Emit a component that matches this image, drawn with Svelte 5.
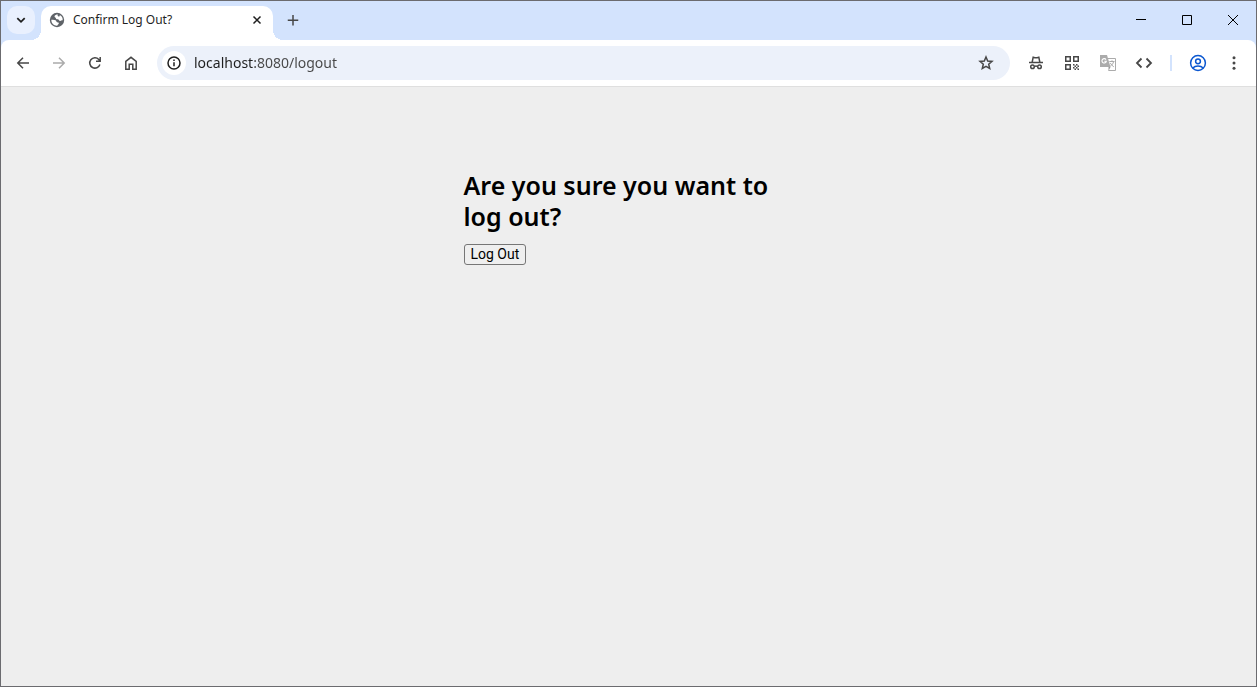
<script lang="ts">
	let address = $state('localhost:8080/logout');
	const title = 'Confirm Log Out?';
</script>

<div class="window">
	<header class="tab-strip">
		<button class="tab-search" type="button" aria-label="Search tabs">
			<svg width="16" height="16" viewBox="0 0 16 16" class="line bold">
				<path d="M4.3 6.2 8 9.8l3.7-3.6" />
			</svg>
		</button>
		<div class="tab">
			<svg width="16" height="16" viewBox="0 0 16 16">
				<circle cx="8" cy="8" r="7.2" fill="#5f6368" />
				<path
					d="M8.600 2.300C7.500 2.800 5.600 3 5.500 4.600c0 1.100 1.400.9 1.500 1.900.1 1 1.300.8 2.300.9 1 .2.600 1.500 1.700 1.600 1 .1 1.400-.7 2.700-.7.200-2.400-1-4.300-2.900-5.300.1 1-.3 1.500-1.100 1.500-.900 0-1.300-1-1.100-2.200z"
					fill="#fff"
				/>
				<path d="M2.300 7.800c1.500-.2 3.200-.2 4.200.5 1 .6.700 1.700 1.700 2 .900.2 1.700.2 1.600 1.200-.1 1-1.300.9-1.500 2.200-3.400.2-6-2.300-6-5.900z" fill="#fff" />
			</svg>
			<span class="title">{title}</span>
			<button class="tab-close" type="button" aria-label="Close tab">
				<svg width="16" height="16" viewBox="0 0 16 16" class="line">
					<path d="m4.500 4.500 7 7m0-7-7 7" />
				</svg>
			</button>
		</div>
		<button class="new-tab" type="button" aria-label="New tab">
			<svg width="16" height="16" viewBox="0 0 16 16" class="line">
				<path d="M8 3v10.500M2.750 8.250h10.500" />
			</svg>
		</button>
		<div class="controls">
			<button type="button" aria-label="Minimize">
				<svg width="12" height="12" viewBox="0 0 12 12" class="thin">
					<path d="M1 5.500h10" />
				</svg>
			</button>
			<button type="button" aria-label="Maximize">
				<svg width="12" height="12" viewBox="0 0 12 12" class="thin">
					<path d="M1.500 1.500h9v9h-9z" />
				</svg>
			</button>
			<button type="button" aria-label="Close">
				<svg width="12" height="12" viewBox="0 0 12 12" class="thin">
					<path d="m1 1 10 10M11 1 1 11" />
				</svg>
			</button>
		</div>
	</header>

	<nav class="toolbar">
		<button type="button" aria-label="Back">
			<svg width="16" height="16" viewBox="0 0 16 16" class="line">
				<path d="M14 8H3M8 2.800 2.800 8 8 13.200" />
			</svg>
		</button>
		<button type="button" aria-label="Forward" class="faded">
			<svg width="16" height="16" viewBox="0 0 16 16" class="line">
				<path d="M2 8h11M8 2.800 13.200 8 8 13.200" />
			</svg>
		</button>
		<button type="button" aria-label="Reload">
			<svg width="16" height="16" viewBox="0 0 16 16" class="line">
				<path d="M12.900 9.500A5.200 5.200 0 1 1 11.800 4.400L13.200 5.900M13.200 2v4.200H9" />
			</svg>
		</button>
		<button type="button" aria-label="Home">
			<svg width="16" height="16" viewBox="0 0 16 16" class="line">
				<path d="M2.800 6.300 8 2.300l5.200 4v7.900H9.800V9.300H6.200v4.900H2.800z" />
			</svg>
		</button>

		<div class="omnibox">
			<button class="site-info" type="button" aria-label="View site information">
				<svg width="16" height="16" viewBox="0 0 16 16" class="line">
					<circle cx="8" cy="8" r="6" />
					<path d="M8 7.200v4M8 4.500v1.500" />
				</svg>
			</button>
			<input type="text" bind:value={address} aria-label="Address" spellcheck="false" />
			<button class="bookmark" type="button" aria-label="Bookmark this tab">
				<svg width="18" height="18" viewBox="0 0 18 18" class="line">
					<path d="m9 3 1.700 4 4.300.4-3.300 2.800 1 4.300L9 12.300l-3.700 2.200 1-4.300L3 7.400 7.300 7z" />
				</svg>
			</button>
		</div>

		<button type="button" aria-label="Incognito extension">
			<svg width="16" height="16" viewBox="0 0 16 16" class="line">
				<path d="M1 7.500h14M4.200 7l1-4.800 1.600.5h2.400l1.600-.5 1 4.800M6.600 11.500c.8-.6 2-.6 2.800 0" />
				<circle cx="4.500" cy="11.700" r="1.800" />
				<circle cx="11.500" cy="11.700" r="1.800" />
			</svg>
		</button>
		<button type="button" aria-label="QR code">
			<svg width="16" height="16" viewBox="0 0 16 16" fill="currentColor">
				<path d="M1 1h6v6H1zm1.500 1.500v3h3v-3zM9 1h6v6H9zm1.500 1.500v3h3v-3zM1 9h6v6H1zm1.500 1.500v3h3v-3z" fill-rule="evenodd" />
				<path d="M9 9h1.500v1.500H9zM12 9h1.500v1.500H12zM10.500 10.500H12V12h-1.500zM13.500 10.500H15V12h-1.500zM9 12h1.500v1.500H9zM12 12h1.500v1.500H12zM10.500 13.500H12V15h-1.500zM13.500 13.500H15V15h-1.500z" />
			</svg>
		</button>
		<button type="button" aria-label="Translate">
			<svg width="18" height="18" viewBox="0 0 18 18" fill="none">
				<path d="M7.500 4.500h9v12H9.500" stroke="#ababab" />
				<path d="M1 1h7l3.500 12H1z" fill="#ababab" />
				<path d="M9.500 17v-4h2z" fill="#999" />
				<path d="M7 5.600a2.200 2.200 0 1 0 .3 1.700H5.300" stroke="#fff" stroke-width="1.100" />
				<path d="M10.300 7.500h5.200M13 6.300v1.200M14.600 7.500c-.4 2.200-1.700 3.700-3.300 4.600M11.300 9c.7 1.500 2 2.800 3.500 3.800" stroke="#ababab" />
			</svg>
		</button>
		<button type="button" aria-label="Developer tools">
			<svg width="18" height="18" viewBox="0 0 18 18" class="line bold">
				<path d="M6.500 4.500 2 9l4.500 4.500M11.500 4.500 16 9l-4.500 4.500" />
			</svg>
		</button>
		<span class="divider"></span>
		<button type="button" aria-label="Profile" class="profile">
			<svg width="18" height="18" viewBox="0 0 18 18" class="line">
				<circle cx="9" cy="9" r="7.400" />
				<circle cx="9" cy="7.300" r="2.400" />
				<path d="M3.800 14c1.300-1.400 3.200-2.100 5.200-2.100s3.900.7 5.200 2.100" />
			</svg>
		</button>
		<button type="button" aria-label="Menu">
			<svg width="16" height="16" viewBox="0 0 16 16" fill="currentColor">
				<circle cx="8" cy="2.700" r="1.500" />
				<circle cx="8" cy="8" r="1.500" />
				<circle cx="8" cy="13.300" r="1.500" />
			</svg>
		</button>
	</nav>

	<main>
		<form class="form-signin" onsubmit={(event) => event.preventDefault()}>
			<h2>Are you sure you want to log out?</h2>
			<button type="submit">Log Out</button>
		</form>
	</main>
</div>

<style>
	:global(body) {
		margin: 0;
	}

	.window {
		display: flex;
		flex-direction: column;
		box-sizing: border-box;
		min-height: 100vh;
		border: 1px solid #6b6b6f;
		background: #d3e3fd;
		font-family: 'Noto Sans', 'Open Sans', sans-serif;
		color: #1f1f1f;
	}

	svg {
		display: block;
		flex: none;
	}

	.line {
		fill: none;
		stroke: currentColor;
		stroke-width: 1.5;
	}

	.bold {
		stroke-width: 1.8;
	}

	.thin {
		fill: none;
		stroke: #000;
		stroke-width: 1;
	}

	.tab-strip button,
	.toolbar button {
		display: flex;
		align-items: center;
		justify-content: center;
		flex: none;
		padding: 0;
		border: none;
		background: transparent;
		color: #474747;
	}

	.tab-strip {
		display: flex;
		height: 39px;
	}

	.tab-strip .tab-search {
		width: 28px;
		height: 28px;
		margin: 5px 6px;
		border-radius: 10px;
		background: #e9f0fe;
		color: #1f1f1f;
	}

	.tab {
		position: relative;
		display: flex;
		align-items: center;
		box-sizing: border-box;
		width: 232px;
		margin-top: 5px;
		padding: 0 8px 6px;
		border-radius: 10px 10px 0 0;
		background: #fff;
	}

	/* flared feet where the tab meets the toolbar */
	.tab::before,
	.tab::after {
		content: '';
		position: absolute;
		bottom: 0;
		width: 10px;
		height: 10px;
	}

	.tab::before {
		right: 100%;
		background: radial-gradient(circle at 0 0, transparent 10px, #fff 10px);
	}

	.tab::after {
		left: 100%;
		background: radial-gradient(circle at 100% 0, transparent 10px, #fff 10px);
	}

	.title {
		flex: 1;
		margin-left: 8px;
		font-size: 12px;
		line-height: 16px;
		white-space: nowrap;
	}

	.tab-strip .tab-close {
		width: 16px;
		height: 16px;
		color: #1f1f1f;
	}

	.tab-strip .new-tab {
		width: 28px;
		height: 28px;
		margin: 5px 6px;
	}

	.controls {
		display: flex;
		margin-left: auto;
	}

	.controls button {
		width: 46px;
		height: 38px;
	}

	.toolbar {
		display: flex;
		align-items: center;
		height: 46px;
		padding: 0 4px;
		border-bottom: 1px solid #dfdfdf;
		border-radius: 8px 8px 0 0;
		background: #fff;
	}

	.toolbar button {
		width: 36px;
		height: 34px;
	}

	.toolbar .faded {
		color: #ababab;
	}

	.toolbar .profile {
		color: #0b57d0;
	}

	.omnibox {
		display: flex;
		align-items: center;
		flex: 1;
		height: 34px;
		margin: 0 8px;
		padding: 0 12px 0 5px;
		box-sizing: border-box;
		border-radius: 17px;
		background: #ecf1fa;
	}

	.omnibox .site-info {
		width: 24px;
		height: 24px;
		border-radius: 50%;
		background: #fff;
		color: #1f1f1f;
	}

	.omnibox input {
		flex: 1;
		min-width: 0;
		margin: 0 8px;
		padding: 0;
		border: none;
		outline: none;
		/* host is darker than the port and path */
		background: linear-gradient(to right, #1f1f1f 60px, #474747 60px) text;
		color: transparent;
		caret-color: #1f1f1f;
		font-family: inherit;
		font-size: 14px;
		line-height: 20px;
	}

	.omnibox .bookmark {
		width: 24px;
		height: 24px;
	}

	.divider {
		width: 2px;
		height: 16px;
		margin: 0 8px;
		background: #d3e3fd;
	}

	main {
		flex: 1;
		padding: 83px 16px 40px;
		background: #eee;
	}

	.form-signin {
		max-width: 330px;
		margin: 0 auto;
	}

	h2 {
		margin: 0 0 12px;
		color: #000;
		font-size: 25px;
		font-weight: 600;
		line-height: 31px;
	}

	.form-signin button {
		display: block;
		height: 21px;
		padding: 0 6px;
		border: 1px solid #767676;
		border-radius: 3px;
		background: #efefef;
		color: #000;
		font-family: Roboto, sans-serif;
		font-size: 14px;
		line-height: 19px;
	}
</style>
